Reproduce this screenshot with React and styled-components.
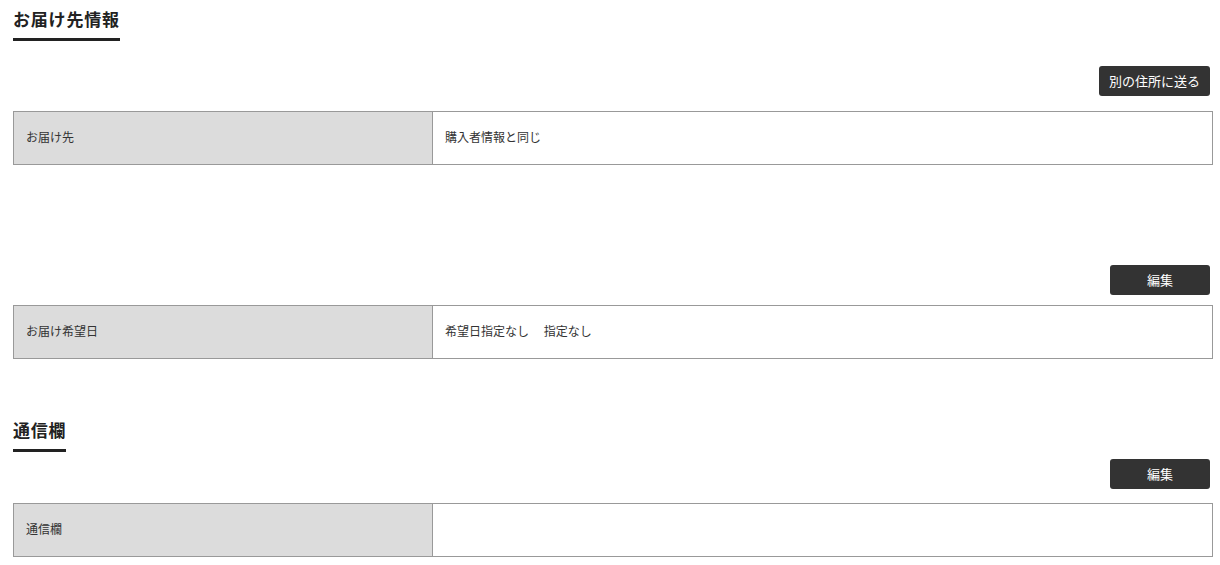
import React from 'react'
import styled, { createGlobalStyle } from 'styled-components'

const GlobalStyle = createGlobalStyle`
body {
    margin: 0;
    background: #fff;
    font-family: "Noto Sans CJK JP", "Noto Sans", sans-serif;
    color: #333;
}
`

function App() {
    return (
        <Page>
            <GlobalStyle />
            <Heading top={6}>お届け先情報</Heading>
            <ButtonRow top={25}>
                <Button>別の住所に送る</Button>
            </ButtonRow>
            <InfoTable top={15}>
                <Label>お届け先</Label>
                <Value>購入者情報と同じ</Value>
            </InfoTable>

            <ButtonRow top={100}>
                <Button wide>編集</Button>
            </ButtonRow>
            <InfoTable top={10}>
                <Label>お届け希望日</Label>
                <Value>希望日指定なし　 指定なし</Value>
            </InfoTable>

            <Heading top={58}>通信欄</Heading>
            <ButtonRow top={7}>
                <Button wide>編集</Button>
            </ButtonRow>
            <InfoTable top={14}>
                <Label>通信欄</Label>
                <Value></Value>
            </InfoTable>
        </Page>
    )
}

export default App

const Page = styled.div`
width: 1200px;
padding-left: 13px;
display: flex;
flex-direction: column;
align-items: flex-start;
`

const Heading = styled.h2`
margin: ${p => p.top}px 0 0;
font-size: 17px;
letter-spacing: 0.8px;
line-height: 26px;
font-weight: 700;
color: #222;
padding-bottom: 6px;
border-bottom: 3px solid #222;
`

const ButtonRow = styled.div`
align-self: stretch;
display: flex;
justify-content: flex-end;
padding-right: 3px;
margin-top: ${p => p.top}px;
`

const Button = styled.button`
height: 30px;
min-width: ${p => (p.wide ? '100px' : '0')};
padding: 0 10px 2px;
border: none;
border-radius: 3px;
background: #333;
color: #fff;
font-family: inherit;
font-size: 13px;
cursor: pointer;
`

const InfoTable = styled.div`
align-self: stretch;
margin-top: ${p => p.top}px;
display: grid;
grid-template-columns: 419px 1fr;
height: 54px;
box-sizing: border-box;
border: 1px solid #999;
font-size: 12px;
`

const Label = styled.div`
background: #dcdcdc;
border-right: 1px solid #999;
display: flex;
align-items: center;
padding: 0 0 3px 12px;
`

const Value = styled.div`
display: flex;
align-items: center;
padding: 0 0 3px 12px;
white-space: pre;
`
